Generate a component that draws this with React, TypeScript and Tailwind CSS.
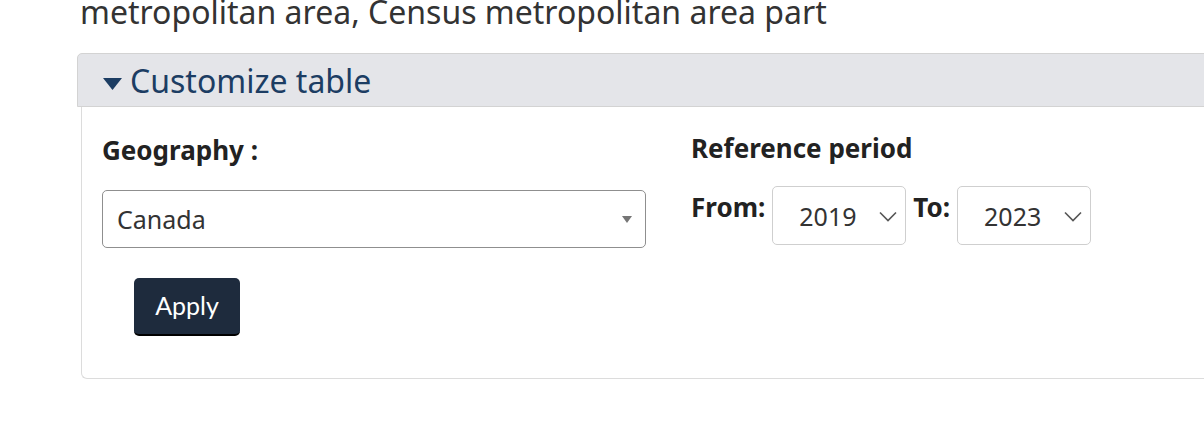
function YearSelect({ value }: { value: string }) {
  return (
    <div className="flex items-center justify-between w-[134px] h-[59px] border border-[#cfcfcf] rounded-[5px] pl-[26px] pr-[8px] bg-white">
      <span className="text-[25px] leading-[30px] text-[#333]">{value}</span>
      <svg width="18" height="11" viewBox="0 0 18 11" className="mt-[1px]">
        <polyline points="1,1.5 9,9.5 17,1.5" fill="none" stroke="#555" strokeWidth="1.6" />
      </svg>
    </div>
  );
}

export default function App() {
  return (
    <div className="w-[1204px] h-[428px] overflow-hidden bg-white font-['Noto_Sans',sans-serif] text-[#333]">
      <div className="pl-[80px]">
        <p className="text-[32px] leading-[24px] whitespace-nowrap text-[#333]">
          metropolitan area, Census metropolitan area part
        </p>
      </div>

      <div className="ml-[77px] mt-[29px] w-[1200px]">
        <div className="h-[54px] bg-[#e4e5e9] border border-[#d3d3d3] rounded-t-[5px] pl-[25px] pt-[9px] flex items-start gap-[8px] text-[#1c3d63]">
          <svg width="19" height="12" viewBox="0 0 19 12" className="mt-[15px]">
            <polygon points="0,0 19,0 9.5,12" fill="#1c3d63" />
          </svg>
          <span className="text-[32px] leading-[35px]">Customize table</span>
        </div>

        <div className="ml-[4px] border-l border-b border-[#dcdcdc] rounded-bl-[6px] pl-[20px] pt-[27px] pb-[42px]">
          <div className="flex gap-[45px]">
            <div className="w-[544px]">
              <div className="-mt-[1px] text-[26px] font-bold leading-[34px] text-[#222]">Geography :</div>
              <div className="mt-[23px] h-[58px] border border-[#8f8f8f] rounded-[5px] flex items-center justify-between pl-[14px] pr-[13px]">
                <span className="text-[25px] leading-[30px] text-[#333]">Canada</span>
                <svg width="10" height="7" viewBox="0 0 10 7">
                  <polygon points="0,0 10,0 5,7" fill="#757575" />
                </svg>
              </div>
            </div>

            <div className="-mt-[3px]">
              <div className="text-[26px] font-bold leading-[34px] text-[#222]">Reference period</div>
              <div className="mt-[21px] flex items-start gap-[7px]">
                <span className="mt-[9px] text-[26px] font-bold leading-[24px] text-[#222]">From:</span>
                <YearSelect value="2019" />
                <span className="mt-[9px] text-[26px] font-bold leading-[24px] text-[#222]">To:</span>
                <YearSelect value="2023" />
              </div>
            </div>
          </div>

          <button className="mt-[30px] ml-[32px] w-[106px] h-[58px] bg-[#1e2b3d] border-b-2 border-black rounded-[5px] text-white text-[25px] font-['Lato',sans-serif]">
            Apply
          </button>
        </div>
      </div>
    </div>
  );
}
